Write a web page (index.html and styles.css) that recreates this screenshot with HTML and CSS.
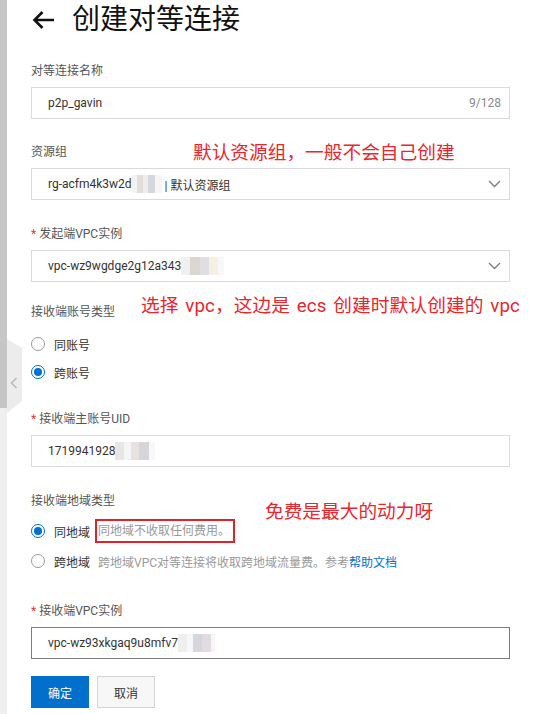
FILE: index.html
```html
<!DOCTYPE html>
<html lang="zh-CN">
<head>
<meta charset="utf-8">
<title>创建对等连接</title>
<link rel="stylesheet" href="styles.css">
</head>
<body>
<div class="page">
  <aside class="rail">
    <div class="rail-top"></div>
    <div class="rail-bottom"></div>
    <div class="rail-tab">
      <svg class="rail-chevron" width="8" height="12" viewBox="0 0 8 12"><path d="M6.5 1 L1.5 6 L6.5 11" fill="none" stroke="#b3bac4" stroke-width="1.6"/></svg>
    </div>
  </aside>
  <main class="content">
    <h1 class="title">
      <svg class="back" width="23" height="20" viewBox="0 0 23 20"><path d="M22 10 H2.5 M10.5 2 L2.5 10 L10.5 18" fill="none" stroke="#111" stroke-width="2.6"/></svg>
      <span>创建对等连接</span>
    </h1>

    <div class="field f1">
      <div class="label">对等连接名称</div>
      <div class="input"><span class="value">p2p_gavin</span><span class="count">9/128</span></div>
    </div>

    <div class="field f2">
      <div class="label">资源组</div>
      <div class="note note-1">默认资源组，一般不会自己创建</div>
      <div class="input select"><span class="value">rg-acfm4k3w2d<span class="blur blur-a"></span> | 默认资源组</span>
        <svg class="caret" width="13" height="8" viewBox="0 0 13 8"><path d="M1 1 L6.5 6.5 L12 1" fill="none" stroke="#7a7a7a" stroke-width="1.3"/></svg>
      </div>
    </div>

    <div class="field f3">
      <div class="label"><span class="req">*</span> 发起端VPC实例</div>
      <div class="input select"><span class="value">vpc-wz9wgdge2g12a343<span class="blur blur-b"></span></span>
        <svg class="caret" width="13" height="8" viewBox="0 0 13 8"><path d="M1 1 L6.5 6.5 L12 1" fill="none" stroke="#7a7a7a" stroke-width="1.3"/></svg>
      </div>
    </div>

    <div class="field f4">
      <div class="label">接收端账号类型</div>
      <div class="note note-2">选择 vpc，这边是 ecs 创建时默认创建的 vpc</div>
      <div class="radios radios-a">
        <div class="radio-row"><span class="radio"></span><span class="radio-text">同账号</span></div>
        <div class="radio-row"><span class="radio checked"></span><span class="radio-text">跨账号</span></div>
      </div>
    </div>

    <div class="field f5">
      <div class="label"><span class="req">*</span> 接收端主账号UID</div>
      <div class="input"><span class="value">1719941928<span class="blur blur-c"></span></span></div>
    </div>

    <div class="field f6">
      <div class="label">接收端地域类型</div>
      <div class="note note-3">免费是最大的动力呀</div>
      <div class="radios radios-b">
        <div class="radio-row"><span class="radio checked"></span><span class="radio-text">同地域</span><span class="help boxed">同地域不收取任何费用。</span></div>
        <div class="radio-row"><span class="radio"></span><span class="radio-text">跨地域</span><span class="help">跨地域VPC对等连接将收取跨地域流量费。参考<a class="link">帮助文档</a></span></div>
      </div>
    </div>

    <div class="field f7">
      <div class="label"><span class="req">*</span> 接收端VPC实例</div>
      <div class="input hover"><span class="value">vpc-wz93xkgaq9u8mfv7<span class="blur blur-d"></span></span></div>
    </div>

    <div class="actions">
      <button class="btn primary">确定</button>
      <button class="btn">取消</button>
    </div>
  </main>
</div>
</body>
</html>
```

FILE: styles.css
```css
* { box-sizing: border-box; }
html, body { margin: 0; padding: 0; background: #fff; }
body {
  font-family: Roboto, "Noto Sans CJK SC", sans-serif;
  font-size: 12px;
  color: #333;
  width: 535px;
  height: 714px;
  overflow: hidden;
}
.page {
  position: relative;
  display: flex;
  height: 714px;
}
.rail {
  width: 7px;
  display: flex;
  flex-direction: column;
  flex: none;
}
.rail-top { height: 408px; background: #c6c6c6; }
.rail-bottom { flex: 1; background: #efefef; }
.rail-tab {
  position: absolute;
  left: 7px;
  top: 339px;
  width: 15px;
  height: 74px;
  background: #ececec;
  clip-path: polygon(0 0, 100% 9px, 100% 62px, 0 100%);
  display: flex;
  align-items: center;
  justify-content: center;
}
.rail-chevron { margin-top: 14px; margin-left: -1px; }

.content {
  flex: 1;
  padding: 0 25px 0 24px;
  display: flex;
  flex-direction: column;
}
.title {
  margin: 0;
  height: 40px;
  display: flex;
  align-items: center;
  font-size: 28px;
  font-weight: 400;
  color: #111;
  line-height: 40px;
}
.back { margin-left: 1px; margin-right: 17px; }

.field { position: relative; display: flex; flex-direction: column; }
.f1 { margin-top: 23px; }
.f2 { margin-top: 25px; }
.f3 { margin-top: 26px; }
.f4 { margin-top: 22px; }
.f5 { margin-top: 25px; }
.f6 { margin-top: 26px; }
.f7 { margin-top: 27px; }

.label {
  line-height: 16px;
  height: 16px;
  color: #555;
  margin-bottom: 8px;
}
.req { color: #e4393c; }

.input {
  height: 32px;
  border: 1px solid #dadada;
  background: #fff;
  display: flex;
  align-items: center;
  padding: 0 8px 0 16px;
  color: #333;
}
.input.hover { border-color: #7d7d7d; }
.value { flex: 1; display: flex; align-items: center; white-space: pre; }
.count { color: #888; }

.blur {
  display: inline-block;
  height: 18px;
  background:
    linear-gradient(90deg, #f1f1f1 0 18%, #dcd7d5 18% 38%, #eceae8 38% 55%, #cfd0d6 55% 78%, #f4f4f4 78% 100%);
  opacity: 0.85;
}
.blur-a { width: 30px; }
.blur-b { width: 43px; background: linear-gradient(90deg, #eeeeee 0 20%, #d5cfca 20% 45%, #d9d9de 45% 65%, #f3ece0 65% 85%, #f6f6f6 85%); }
.blur-c { width: 40px; background: linear-gradient(90deg, #e2e2e2 0 22%, #f3f3f3 22% 40%, #e3dcdc 40% 60%, #cdcdd3 60% 85%, #f7f7f7 85%); }
.blur-d { width: 37px; background: linear-gradient(90deg, #ececec 0 25%, #f6f6f6 25% 40%, #cfd0d8 40% 65%, #ddd6dd 65% 88%, #f4f4f4 88%); }

.note {
  position: absolute;
  font-size: 18.7px;
  line-height: 24px;
  color: #e8262d;
  white-space: nowrap;
}
.note-1 { left: 162px; top: -3px; }
.note-2 { left: 110px; top: -10px; word-spacing: 2px; letter-spacing: 0.1px; }
.note-3 { left: 234px; top: 7px; }

.radios { display: flex; flex-direction: column; }
.radios-a { margin-top: 2px; }
.radios-a .radio-row { height: 28px; }
.radios-b { margin-top: -1px; }
.radios-b .radio-row { height: 30px; }
.radio-row { display: flex; align-items: center; }
.radio {
  width: 14px;
  height: 14px;
  border: 1px solid #9a9a9a;
  border-radius: 50%;
  background: #fff;
  display: flex;
  align-items: center;
  justify-content: center;
  flex: none;
}
.radio.checked { border-color: #0070cc; }
.radio.checked::after {
  content: "";
  width: 8px;
  height: 8px;
  border-radius: 50%;
  background: #0070cc;
}
.radio-text { margin-left: 9px; color: #333; }
.help { margin-left: 5px; color: #999; white-space: nowrap; }
.radios-b .radio-row:last-child .help { margin-left: 8px; }
.help.boxed {
  border: 2px solid #e0222b;
  height: 24px;
  line-height: 20px;
  padding: 0 3px 0 1px;
}
.link { color: #0070cc; }

.actions {
  margin-top: 17px;
  display: flex;
  gap: 8px;
}
.btn {
  width: 58px;
  height: 32px;
  font: inherit;
  font-size: 12px;
  border: 1px solid #d4d4d4;
  background: #f7f7f7;
  color: #333;
  padding: 0;
}
.btn.primary {
  background: #0070cc;
  border-color: #0070cc;
  color: #fff;
}
```
